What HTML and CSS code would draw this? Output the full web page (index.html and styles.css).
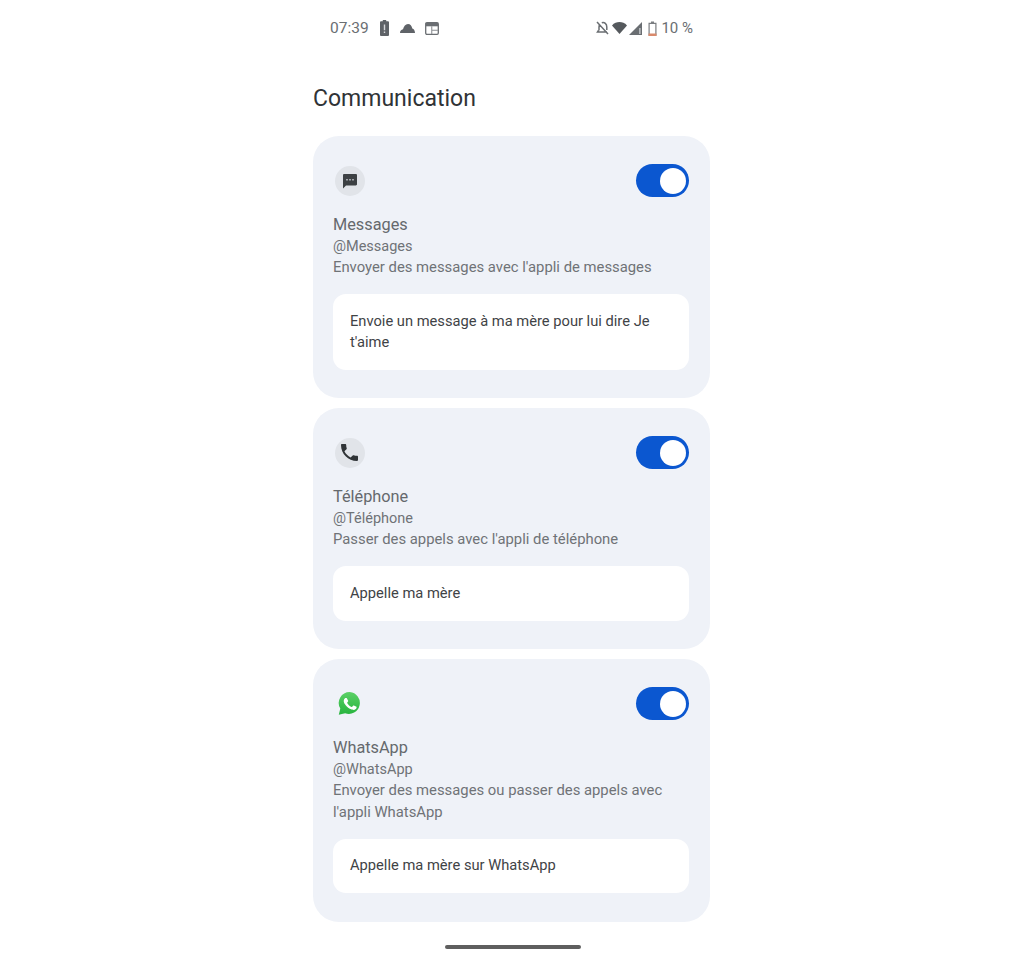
FILE: index.html
```html
<!DOCTYPE html>
<html lang="fr">
<head>
<meta charset="utf-8">
<title>Communication</title>
<link rel="stylesheet" href="styles.css">
</head>
<body>
<main class="phone">
  <header class="status">
    <div class="status-group left">
      <span class="time">07:39</span>
      <svg class="ico" width="11" height="16" viewBox="0 0 11 16"><path fill="#5f6368" d="M3.800 0h3.400v1.300H9a1 1 0 0 1 1 1V15a1 1 0 0 1-1 1H2a1 1 0 0 1-1-1V2.300a1 1 0 0 1 1-1h1.800z"/><path fill="#d5d7da" d="M4.800 4.500h1.400v5.800H4.800zM4.800 11.600h1.400v1.500H4.800z"/></svg>
      <svg class="ico" width="15" height="9" viewBox="0 0 15 9"><path fill="#5f6368" d="M0 9c0-2 1.200-3.300 3-3.700C3.800 2.200 5.500 0 8 0c2.300 0 3.800 1.900 4.300 4.500C13.900 5 15 6.800 15 9z"/></svg>
      <svg class="ico" width="14" height="13" viewBox="0 0 14 13"><rect x=".7" y=".7" width="12.600" height="11.600" rx="1.200" fill="none" stroke="#6a6e72" stroke-width="1.300"/><path fill="#6a6e72" d="M1 1h12v3.300H1z"/><path fill="#8d9094" d="M6.200 4.300h1.100V12H6.200zM7 7.800h6v1H7z"/></svg>
    </div>
    <div class="status-group right">
      <svg class="ico" width="16" height="14" viewBox="0 0 16 14"><path fill="none" stroke="#6a6e72" stroke-width="1.500" d="M1 1l11 12M2.500 9.500 1.500 11H11M3 9.500V6c0-1 .3-2 1-2.600M5.800 1.800C8.500.8 10.800 3 10.800 6v3"/></svg>
      <svg class="ico" width="17" height="12" viewBox="0 0 17 12"><path fill="#55595d" d="M0 3.400C4.300-1 10.700-1 15 3.400L7.500 12z"/></svg>
      <svg class="ico" width="19" height="13" viewBox="0 0 19 13"><path fill="#6a6e72" d="M13 0v13H0z"/><path fill="#d5d7da" d="M10.300 6h1.200v6h-1.200z"/></svg>
      <svg class="ico" width="13" height="15" viewBox="0 0 13 15"><path fill="none" stroke="#7a7d80" stroke-width="1.200" d="M1.100 2.300h6.800v11.800H1.100z"/><path fill="#7a7d80" d="M3 .5h3v1.800H3z"/><path fill="#d98a6c" d="M.5 12.500h8V15h-8z"/></svg>
      <span class="pct">10 %</span>
    </div>
  </header>

  <h1 class="title">Communication</h1>

  <section class="card">
    <div class="card-top">
      <span class="app-ico grey">
        <svg width="16" height="16" viewBox="0 0 16 16"><path fill="#3c4043" d="M1 2.200C1 1.500 1.500 1 2.200 1h11.600c.7 0 1.200.5 1.200 1.200v9.100c0 .7-.5 1.200-1.200 1.200H4L1 15.500z"/><path fill="#c9ccd1" d="M4.300 6h1.400v1.400H4.300zM7.300 6h1.400v1.400H7.300zM10.300 6h1.400v1.400h-1.400z"/></svg>
      </span>
      <span class="toggle"><span class="knob"></span></span>
    </div>
    <h2 class="app-name">Messages</h2>
    <p class="app-handle">@Messages</p>
    <p class="app-desc">Envoyer des messages avec l'appli de messages</p>
    <div class="example">Envoie un message à ma mère pour lui dire Je t'aime</div>
  </section>

  <section class="card">
    <div class="card-top">
      <span class="app-ico grey">
        <svg width="17" height="17" viewBox="3 3 18 18"><path fill="#2f3336" d="M6.620 10.790c1.440 2.830 3.760 5.140 6.590 6.590l2.200-2.200c.27-.27.670-.36 1.020-.24 1.120.37 2.330.57 3.570.57.550 0 1 .45 1 1V20c0 .55-.45 1-1 1-9.390 0-17-7.610-17-17 0-.55.45-1 1-1h3.500c.55 0 1 .45 1 1 0 1.250.2 2.450.57 3.570.11.350.03.740-.25 1.020l-2.200 2.200z"/></svg>
      </span>
      <span class="toggle"><span class="knob"></span></span>
    </div>
    <h2 class="app-name">Téléphone</h2>
    <p class="app-handle">@Téléphone</p>
    <p class="app-desc">Passer des appels avec l'appli de téléphone</p>
    <div class="example">Appelle ma mère</div>
  </section>

  <section class="card">
    <div class="card-top">
      <span class="app-ico">
        <svg width="25" height="25" viewBox="0 0 25 25"><defs><linearGradient id="wa" x1="0" y1="0" x2="0" y2="1"><stop offset="0" stop-color="#5bd066"/><stop offset="1" stop-color="#27b43e"/></linearGradient></defs><path fill="url(#wa)" d="M12.800 1a11 11 0 0 0-9.500 16.600L1.800 23.800l6.300-1.500A11 11 0 1 0 12.800 1z"/><path fill="#fff" transform="translate(1.900 1.800) scale(.85)" d="M9.500 6.800c-.3-.6-.5-.6-.8-.6h-.7c-.3 0-.7.100-1 .5-.4.400-1.300 1.300-1.300 3.100s1.300 3.600 1.500 3.800c.2.300 2.600 4.100 6.400 5.600 3.100 1.200 3.800 1 4.500.9.700-.1 2.200-.9 2.500-1.800.3-.9.300-1.600.2-1.800-.1-.2-.3-.2-.7-.4l-2.500-1.200c-.4-.1-.6-.2-.9.200l-1.100 1.400c-.2.300-.4.300-.8.100-.4-.2-1.600-.6-3-1.900-1.100-1-1.800-2.200-2.100-2.600-.2-.4 0-.6.200-.8l.6-.7c.2-.2.200-.4.400-.6.100-.3 0-.5 0-.7z"/></svg>
      </span>
      <span class="toggle"><span class="knob"></span></span>
    </div>
    <h2 class="app-name">WhatsApp</h2>
    <p class="app-handle">@WhatsApp</p>
    <p class="app-desc">Envoyer des messages ou passer des appels avec l'appli WhatsApp</p>
    <div class="example">Appelle ma mère sur WhatsApp</div>
  </section>

  <div class="home-bar"></div>
</main>
</body>
</html>
```
FILE: styles.css
```css
* { box-sizing: border-box; }
html, body { margin: 0; padding: 0; background: #fff; }
body { font-family: Roboto, "Liberation Sans", sans-serif; color: #5f6368; }
.phone {
  width: 397px;
  height: 957px;
  margin-left: 313px;
  display: flex;
  flex-direction: column;
}
.status {
  height: 20px;
  margin-top: 18px;
  padding: 0 17px;
  display: flex;
  align-items: center;
  justify-content: space-between;
}
.status-group { display: flex; align-items: center; }
.left { gap: 10px; }
.ico { display: block; flex: none; }
.time { font-size: 15.500px; color: #6a6e72; }
.pct { font-size: 15px; color: #6a6e72; }
.title {
  margin: 47px 0 0;
  height: 28px;
  font-size: 23px;
  line-height: 28px;
  font-weight: 400;
  color: #303336;
}
.card {
  margin-top: 10px;
  background: #eff2f8;
  border-radius: 26px;
  padding: 28px 21px 28.500px 20px;
  display: flex;
  flex-direction: column;
}
.title + .card { margin-top: 23px; }
.card-top {
  height: 33px;
  display: flex;
  align-items: center;
  justify-content: space-between;
}
.app-ico {
  width: 30px;
  height: 30px;
  margin-left: 1.500px;
  border-radius: 50%;
  display: flex;
  align-items: center;
  justify-content: center;
}
.grey { background: #e1e4e9; }
.toggle {
  width: 53px;
  height: 33px;
  border-radius: 17px;
  background: #0b57d0;
  display: flex;
  align-items: center;
  justify-content: flex-end;
  padding-right: 3px;
}
.knob { width: 26px; height: 26px; border-radius: 50%; background: #fff; }
.app-name {
  margin: 16.500px 0 0;
  font-size: 16.300px;
  line-height: 22px;
  font-weight: 400;
  color: #65696d;
}
.app-handle, .app-desc {
  margin: 0;
  line-height: 21.500px;
  color: #6f7377;
}
.app-handle { font-size: 14.500px; }
.app-desc { font-size: 14.830px; }
.example {
  margin-top: 15.500px;
  padding: 16.750px 17px;
  background: #fff;
  border-radius: 13px;
  font-size: 14.700px;
  line-height: 21px;
  color: #3f4346;
}
.home-bar {
  width: 136px;
  height: 4px;
  margin: 23.500px 0 0 132px;
  background: #5f5f5f;
  border-radius: 2px;
}
```
